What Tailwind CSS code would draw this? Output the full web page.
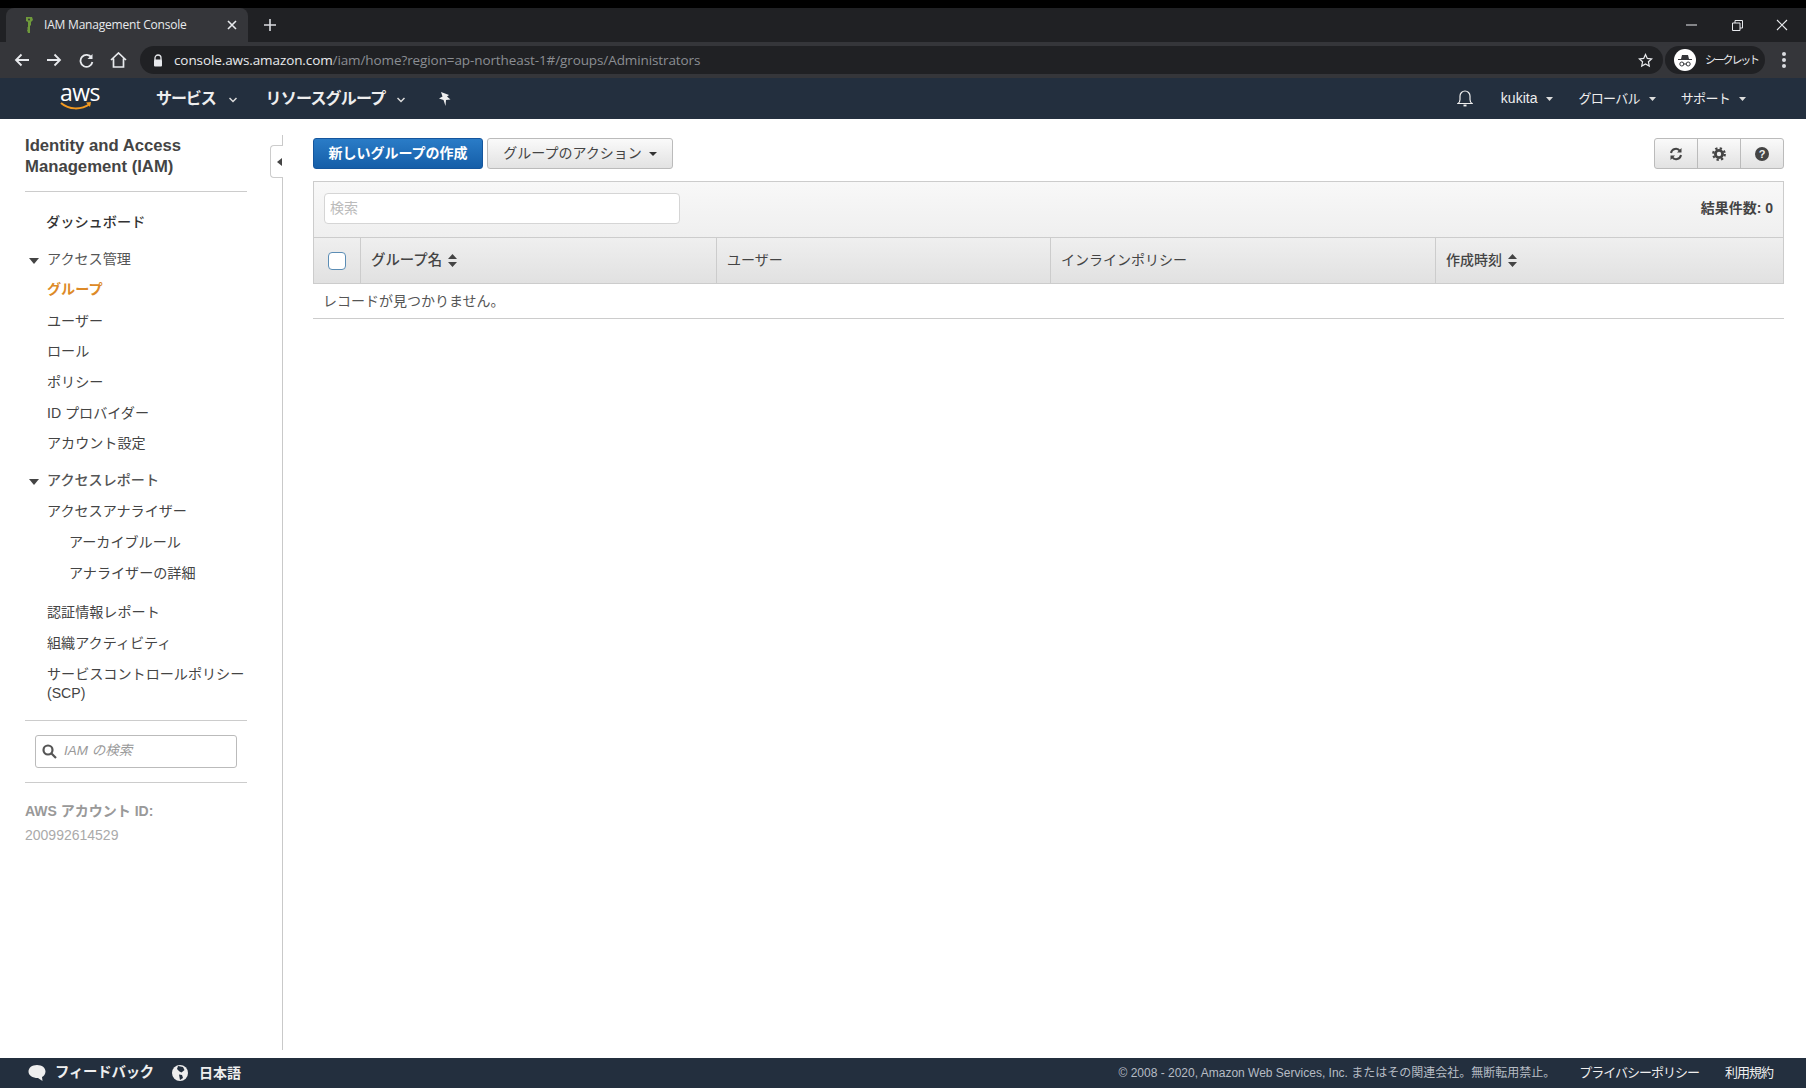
<!DOCTYPE html>
<html lang="ja">
<head>
<meta charset="UTF-8">
<title>IAM Management Console</title>
<script src="https://cdn.jsdelivr.net/npm/@tailwindcss/browser@4"></script>
</head>
<body class="h-[1088px] w-[1806px] overflow-hidden flex flex-col bg-white font-['Liberation_Sans','Noto_Sans_CJK_JP',sans-serif] text-[14px] text-[#444]">

<!-- browser chrome -->
<div class="h-2 bg-black"></div>
<div class="h-[34px] bg-[#202124] flex items-end pl-[6px] text-[#e8eaed]">
  <div class="h-[34px] w-[242px] shrink-0 bg-[#35363a] rounded-t-lg flex items-center pl-[17px] pr-[11px]">
    <svg class="shrink-0" width="12" height="18" viewBox="0 0 12 18"><path d="M3 1h6l1 3-2 2v3l-1 1v7H5l-1-3 1-1-1-1 1-1V6L3 5z" fill="#6f9a3b"/><circle cx="6" cy="3.6" r="1" fill="#35363a"/></svg>
    <span class="ml-[9px] text-[12px] tracking-[-0.2px] whitespace-nowrap font-['Open_Sans','Noto_Sans_CJK_JP',sans-serif]">IAM Management Console</span>
    <svg class="ml-auto shrink-0" width="10" height="10" viewBox="0 0 10 10"><path d="M1 1l8 8M9 1l-8 8" stroke="#e8eaed" stroke-width="1.6"/></svg>
  </div>
  <svg class="ml-[16px] mb-[11px]" width="12" height="12" viewBox="0 0 12 12"><path d="M6 0v12M0 6h12" stroke="#dadce0" stroke-width="1.6"/></svg>
  <div class="ml-auto h-[34px] flex items-center">
    <div class="w-[46px] flex justify-center"><svg width="11" height="2" viewBox="0 0 11 2"><path d="M0 1h11" stroke="#e8eaed"/></svg></div>
    <div class="w-[46px] flex justify-center"><svg width="11" height="11" viewBox="0 0 11 11" fill="none" stroke="#e8eaed"><path d="M.5 3h7.500v7.500H.5zM3 3V.5h7.500V8H8"/></svg></div>
    <div class="w-[44px] flex justify-center"><svg width="12" height="12" viewBox="0 0 12 12"><path d="M1 1l10 10M11 1L1 11" stroke="#e8eaed" stroke-width="1.100"/></svg></div>
    <div class="w-[2px]"></div>
  </div>
</div>
<div class="h-9 bg-[#35363a] flex items-center text-[#e8eaed]">
  <div class="w-[140px] shrink-0 flex items-center pl-[14px] gap-[16px]">
    <svg width="16" height="14" viewBox="0 0 16 14" fill="none" stroke="#e8eaed" stroke-width="1.800"><path d="M15 7H2M7.500 1.500L2 7l5.500 5.500"/></svg>
    <svg width="16" height="14" viewBox="0 0 16 14" fill="none" stroke="#e8eaed" stroke-width="1.800"><path d="M1 7h13M8.500 1.500L14 7l-5.500 5.500"/></svg>
    <svg class="ml-[1px]" width="15" height="15" viewBox="0 0 15 15" fill="none" stroke="#e8eaed" stroke-width="1.800"><path d="M12.500 4.500A6 6 0 1 0 13.400 9"/><path d="M13.500 1v5h-5" fill="#e8eaed" stroke="none"/></svg>
    <svg width="17" height="16" viewBox="0 0 17 16" fill="none" stroke="#e8eaed" stroke-width="1.700"><path d="M1 8l7.500-7L16 8M3.500 6.500V15h10V6.500"/></svg>
  </div>
  <div class="h-7 w-[1523px] shrink-0 bg-[#202124] rounded-full flex items-center pl-[13px] pr-[10px]">
    <svg width="10" height="13" viewBox="0 0 10 13"><path d="M2 6V4a3 3 0 0 1 6 0v2" fill="none" stroke="#e8eaed" stroke-width="1.300"/><rect x="1" y="5.500" width="8" height="7" rx="1" fill="#e8eaed"/></svg>
    <span class="ml-[11px] text-[13.500px] tracking-[-0.1px] font-['Open_Sans',sans-serif] whitespace-nowrap"><span class="text-[#e8eaed]">console.aws.amazon.com</span><span class="text-[#8b8e93]">/iam/home?region=ap-northeast-1#/groups/Administrators</span></span>
    <svg class="ml-auto" width="15" height="15" viewBox="0 0 24 24" fill="none" stroke="#e8eaed" stroke-width="2"><path d="M12 2.500l2.900 6.200 6.800.8-5 4.600 1.300 6.700-6-3.300-6 3.300 1.300-6.700-5-4.600 6.800-.8z"/></svg>
  </div>
  <div class="ml-[2px] h-7 w-[100px] shrink-0 rounded-full bg-[#202124] flex items-center pl-[9px]">
    <span class="w-[22px] h-[22px] shrink-0 rounded-full bg-white flex items-center justify-center">
      <svg width="16" height="13" viewBox="0 0 16 13"><path d="M5 1h6l1 4h3v1H1V5h3z" fill="#35363a"/><circle cx="4.800" cy="10" r="2" fill="none" stroke="#35363a"/><circle cx="11.200" cy="10" r="2" fill="none" stroke="#35363a"/><path d="M6.800 10h2.400" stroke="#35363a"/></svg>
    </span>
    <span class="ml-[9px] text-[11px] tracking-[-2.200px] whitespace-nowrap">シークレット</span>
  </div>
  <div class="ml-[17px] flex flex-col gap-[2.500px]">
    <span class="w-[3.500px] h-[3.500px] rounded-full bg-[#dadce0]"></span>
    <span class="w-[3.500px] h-[3.500px] rounded-full bg-[#dadce0]"></span>
    <span class="w-[3.500px] h-[3.500px] rounded-full bg-[#dadce0]"></span>
  </div>
</div>

<!-- aws top nav -->
<nav class="h-[41px] bg-[#232f3e] flex items-center text-[#eee]">
  <div class="w-[156px] pl-[60px] flex flex-col items-start -mt-[2px]">
    <span class="text-[23px] leading-[19px] font-['Open_Sans',sans-serif] tracking-[-0.5px] text-white">aws</span>
    <svg class="mt-[-1px]" width="32" height="11" viewBox="0 0 32 11" fill="none"><path d="M1 2c8 7 20 7 29 1" stroke="#f39a21" stroke-width="2"/><path d="M26 1.500l5-.5-1 5z" fill="#f39a21"/></svg>
  </div>
  <span class="font-bold text-[16px] tracking-[-1.100px]">サービス</span>
  <svg class="ml-[13px] mt-[2px]" width="8" height="6" viewBox="0 0 8 6" fill="none" stroke="#ddd" stroke-width="1.500"><path d="M.5 1L4 4.500 7.500 1"/></svg>
  <span class="ml-[29px] font-bold text-[16px] tracking-[-0.8px]">リソースグループ</span>
  <svg class="ml-[12px] mt-[2px]" width="8" height="6" viewBox="0 0 8 6" fill="none" stroke="#ddd" stroke-width="1.500"><path d="M.5 1L4 4.500 7.500 1"/></svg>
  <svg class="ml-[33px]" width="13" height="14" viewBox="0 0 13 14"><path d="M3 0l8 3-2 1.500 3.500 3-4.500.5-.5 6-2-6L1 6.500l3.500-2z" fill="#eee"/></svg>
  <svg class="ml-auto" width="16" height="17" viewBox="0 0 16 17" fill="none" stroke="#eee" stroke-width="1.200"><path d="M1 13.500c1.500-1 2-2 2-4V6a5 5 0 0 1 10 0v3.500c0 2 .5 3 2 4z"/><path d="M6.500 15.500h3" stroke-width="1.800"/></svg>
  <span class="ml-[28px] text-[14px]">kukita</span>
  <svg class="ml-[9px]" width="7" height="4" viewBox="0 0 7 4"><path d="M0 0h7L3.500 4z" fill="#ddd"/></svg>
  <span class="ml-[25px] text-[13px] tracking-[-0.7px]">グローバル</span>
  <svg class="ml-[9px]" width="7" height="4" viewBox="0 0 7 4"><path d="M0 0h7L3.500 4z" fill="#ddd"/></svg>
  <span class="ml-[25px] text-[13px] tracking-[-0.7px]">サポート</span>
  <svg class="ml-[9px] mr-[60px]" width="7" height="4" viewBox="0 0 7 4"><path d="M0 0h7L3.500 4z" fill="#ddd"/></svg>
</nav>

<div class="flex-1 flex min-h-0">
  <!-- sidebar -->
  <aside class="relative w-[283px] mt-[16px] mb-[8px] border-r border-[#c9c9c9] pl-[25px] pr-[35px] shrink-0">
    <h1 class="text-[16.700px] leading-[21px] font-bold text-[#444] pb-[14px] border-b border-[#ccc] whitespace-nowrap">Identity and Access<br>Management (IAM)</h1>
    <ul class="mt-[15px] text-[14.100px] text-[#444]">
      <li class="h-[31px] leading-[31px] pl-[21px] text-[#333] text-[14.200px] font-medium">ダッシュボード</li>
      <li class="mt-[6px] h-[31px] flex items-center relative pl-[22px] text-[#555]"><svg class="absolute left-[4px] top-[14px]" width="10" height="6" viewBox="0 0 10 6"><path d="M0 0h10L5 6z" fill="#444"/></svg>アクセス管理</li>
      <li class="h-[30.700px] leading-[29px] pl-[22px] font-bold text-[#dd8a27]">グループ</li>
      <li class="h-[30.700px] leading-[30.700px] pl-[22px]">ユーザー</li>
      <li class="h-[30.700px] leading-[30.700px] pl-[22px]">ロール</li>
      <li class="h-[30.700px] leading-[30.700px] pl-[22px]">ポリシー</li>
      <li class="h-[30.700px] leading-[30.700px] pl-[22px]">ID プロバイダー</li>
      <li class="h-[30.700px] leading-[30.700px] pl-[22px]">アカウント設定</li>
      <li class="mt-[6px] h-[31px] flex items-center relative pl-[22px] font-medium text-[#555]"><svg class="absolute left-[4px] top-[14px]" width="10" height="6" viewBox="0 0 10 6"><path d="M0 0h10L5 6z" fill="#444"/></svg>アクセスレポート</li>
      <li class="h-[30.700px] leading-[30.700px] pl-[22px]">アクセスアナライザー</li>
      <li class="h-[30.700px] leading-[30.700px] pl-[44px]">アーカイブルール</li>
      <li class="h-[30.700px] leading-[30.700px] pl-[44px]">アナライザーの詳細</li>
      <li class="mt-[9px] h-[30.700px] leading-[30.700px] pl-[22px]">認証情報レポート</li>
      <li class="h-[30.700px] leading-[30.700px] pl-[22px]">組織アクティビティ</li>
      <li class="pl-[22px] leading-[19px] pt-[6px] whitespace-nowrap">サービスコントロールポリシー<br>(SCP)</li>
    </ul>
    <div class="mt-[17px] border-y border-[#ccc] py-[14px] px-[10px]">
      <div class="h-[33px] w-[202px] border border-[#bbb] rounded-[3px] flex items-center pl-[6px]">
        <svg width="15" height="15" viewBox="0 0 15 15" fill="none" stroke="#555" stroke-width="2.200"><circle cx="6" cy="6" r="4.500"/><path d="M9.500 9.500l4.500 4.500"/></svg>
        <input class="ml-[7px] w-[160px] outline-none italic text-[13.500px] placeholder:text-[#999]" placeholder="IAM の検索">
      </div>
    </div>
    <p class="mt-[18px] text-[#999] font-bold text-[14px] leading-[20px]">AWS アカウント ID:</p>
    <p class="mt-[4px] text-[#aaa] text-[14px] leading-[20px]">200992614529</p>
    <!-- collapse tab -->
    <div class="absolute right-[-1px] top-[10px] w-[13px] h-[33px] bg-white border border-r-0 border-[#ccc] rounded-l-[4px] flex items-center justify-end pr-[1px]">
      <svg width="5" height="8" viewBox="0 0 5 8"><path d="M5 0v8L0 4z" fill="#444"/></svg>
    </div>
  </aside>

  <!-- main -->
  <main class="flex-1 pl-[30px] pr-[22px] pt-[19px] min-w-0">
    <div class="flex items-start">
      <button class="h-[31px] w-[170px] rounded-[3px] border border-[#15569d] bg-gradient-to-b from-[#2a7cc7] to-[#155ea8] text-white font-bold text-[14px]">新しいグループの作成</button>
      <button class="ml-[4px] h-[31px] w-[186px] rounded-[3px] border border-[#bbb] bg-gradient-to-b from-[#fafafa] to-[#e2e2e2] text-[#444] text-[14px] flex items-center justify-center gap-[7px]">グループのアクション<svg width="8" height="4" viewBox="0 0 8 4"><path d="M0 0h8L4 4z" fill="#333"/></svg></button>
      <div class="ml-auto h-[31px] w-[130px] flex rounded-[3px] border border-[#bbb] bg-gradient-to-b from-[#fafafa] to-[#e2e2e2]">
        <div class="w-[43px] flex items-center justify-center border-r border-[#bbb]">
          <svg width="14" height="14" viewBox="0 0 14 14" fill="none" stroke="#444" stroke-width="2"><path d="M2 6a5 5 0 0 1 9-2M12 8a5 5 0 0 1-9 2"/><path d="M12.500 1v4.500H8zM1.500 13V8.500H6z" fill="#444" stroke="none"/></svg>
        </div>
        <div class="w-[43px] flex items-center justify-center border-r border-[#bbb]">
          <svg width="14" height="14" viewBox="0 0 14 14" fill="none" stroke="#444"><circle cx="7" cy="7" r="5.800" stroke-width="2.200" stroke-dasharray="2.300 2.255"/><circle cx="7" cy="7" r="3.600" stroke-width="2.800"/></svg>
        </div>
        <div class="flex-1 flex items-center justify-center">
          <span class="w-[14px] h-[14px] rounded-full bg-[#444] text-[#f0f0f0] text-[11px] leading-[14px] font-bold text-center">?</span>
        </div>
      </div>
    </div>

    <div class="mt-[12px] h-[56px] pb-[3px] border border-[#ccc] border-b-0 bg-gradient-to-b from-[#f8f8f8] to-[#efefef] flex items-center pl-[10px] pr-[10px]">
      <input class="h-[31px] w-[356px] rounded-[4px] border border-[#d5d5d5] bg-white px-[5px] text-[14px] outline-none placeholder:text-[#bbb]" placeholder="検索">
      <span class="ml-auto font-bold text-[14px] text-[#444]">結果件数: 0</span>
    </div>

    <div class="h-[47px] flex border border-[#ccc] bg-gradient-to-b from-[#efefef] to-[#e1e1e1] text-[14px]">
      <div class="w-[47px] flex items-center justify-center border-r border-[#ccc]">
        <span class="w-[18px] h-[18px] rounded-[4px] bg-white border border-[#5b8db5]"></span>
      </div>
      <div class="w-[356px] flex items-center pl-[10px] border-r border-[#ccc] font-medium text-[14.400px] text-[#444]">グループ名<svg class="ml-[6px]" width="9" height="13" viewBox="0 0 9 13"><path d="M4.500 0L9 5H0zM4.500 13L0 8h9z" fill="#444"/></svg></div>
      <div class="w-[334px] flex items-center pl-[10px] border-r border-[#ccc] text-[#444]">ユーザー</div>
      <div class="w-[385px] flex items-center pl-[10px] border-r border-[#ccc] text-[#444]">インラインポリシー</div>
      <div class="flex-1 flex items-center pl-[10px] font-medium text-[#444]">作成時刻<svg class="ml-[6px]" width="9" height="13" viewBox="0 0 9 13"><path d="M4.500 0L9 5H0zM4.500 13L0 8h9z" fill="#444"/></svg></div>
    </div>
    <div class="h-[35px] border-b border-[#ccc] flex items-center pl-[10px] text-[#555]">レコードが見つかりません。</div>
  </main>
</div>

<!-- footer -->
<footer class="h-[30px] bg-[#232f3e] flex items-center text-[#eee]">
  <svg class="ml-[28px]" width="18" height="17" viewBox="0 0 18 17"><path d="M9 0c5 0 8.500 2.800 8.500 6.500 0 2.600-1.700 4.600-3.500 5.500l.500 4-4.500-3C4.500 13 .5 10.500.5 6.500.5 2.800 4 0 9 0z" fill="#eee"/></svg>
  <span class="ml-[9px] font-bold text-[14.400px] tracking-[-0.2px]">フィードバック</span>
  <svg class="ml-[18px]" width="16" height="16" viewBox="0 0 16 16"><circle cx="8" cy="8" r="8" fill="#eee"/><path d="M6 1l5 1 1.500 3-3 2.500-2-1L5 4zM7 9.500l3 .5 1 3-3 2z" fill="#232f3e"/></svg>
  <span class="ml-[11px] font-bold text-[14px]">日本語</span>
  <span class="ml-auto text-[12px] text-[#b6bcc4]">© 2008 - 2020, Amazon Web Services, Inc. またはその関連会社。無断転用禁止。</span>
  <span class="ml-[24px] text-[13px] tracking-[-1px]">プライバシーポリシー</span>
  <span class="ml-[26px] mr-[33px] text-[13px] tracking-[-1px]">利用規約</span>
</footer>
</body>
</html>
